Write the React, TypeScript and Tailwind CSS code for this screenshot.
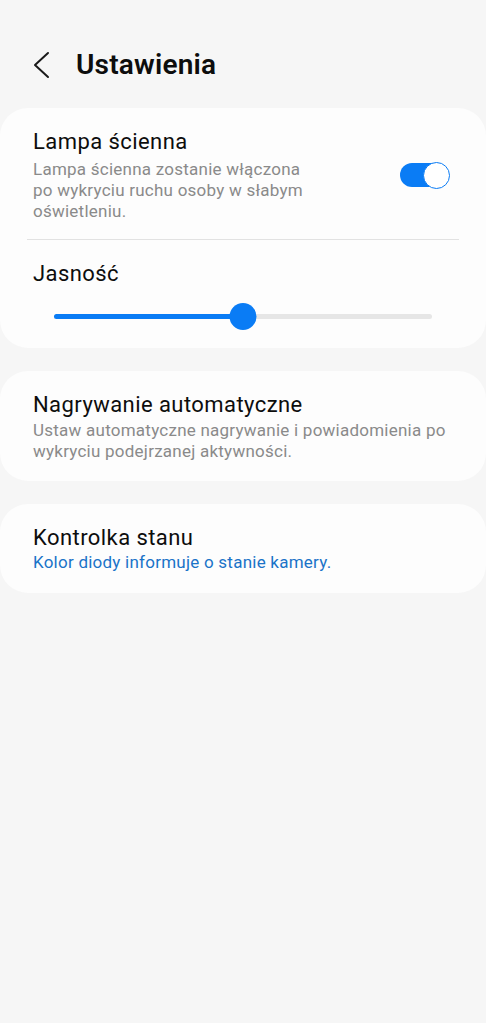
function Toggle() {
  return (
    <div className="relative flex h-[27px] w-[50px] shrink-0 items-center">
      <div className="h-[24px] w-[48px] rounded-full bg-[#0a7cf5]" />
      <div className="absolute right-0 top-0 h-[27px] w-[27px] rounded-full border-[1.5px] border-[#0a7cf5] bg-white" />
    </div>
  );
}

function Slider({ value }: { value: number }) {
  return (
    <div className="relative mx-[54px] h-[27px]">
      <div className="absolute left-0 right-0 top-[11px] h-[5px] rounded-full bg-[#e6e6e6]" />
      <div className="absolute left-0 top-[11px] h-[5px] rounded-full bg-[#0a7cf5]" style={{ width: `${value}%` }} />
      <div
        className="absolute top-0 h-[27px] w-[27px] -translate-x-1/2 rounded-full bg-[#0a7cf5]"
        style={{ left: `${value}%` }}
      />
    </div>
  );
}

export default function App() {
  return (
    <div className="min-h-[1023px] bg-[#f6f6f6] font-['Roboto',sans-serif] text-[#0d0d0d]">
      <div className="flex h-[108px] items-start pt-[47px]">
        <div className="flex h-[36px] items-center">
          <svg className="ml-[33px]" width="17" height="28" viewBox="0 0 17 28" fill="none">
            <polyline points="15,2 2,14 15,26" stroke="#1a1a1a" strokeWidth="2" strokeLinecap="round" strokeLinejoin="round" />
          </svg>
          <h1 className="ml-[26px] text-[28px] font-semibold leading-[36px] tracking-[0.2px]">Ustawienia</h1>
        </div>
      </div>

      <div className="flex flex-col gap-[23px]">
        <div className="rounded-[28px] bg-[#fdfdfd]">
          <div className="flex items-center pb-[17px] pl-[33px] pr-[36px] pt-[20px]">
            <div className="flex-1">
              <div className="text-[22px] leading-[28px] tracking-[0.43px]">Lampa ścienna</div>
              <div className="mt-[3px] w-[280px] text-[17px] leading-[21px] tracking-[0.24px] text-[#8a8a8a]">
                Lampa ścienna zostanie włączona po wykryciu ruchu osoby w słabym oświetleniu.
              </div>
            </div>
            <Toggle />
          </div>
          <div className="mx-[27px] h-px bg-[#e2e2e2]" />
          <div className="pb-[18px] pt-[20px]">
            <div className="pl-[33px] text-[22px] leading-[28px] tracking-[0.43px]">Jasność</div>
            <div className="mt-[15px]">
              <Slider value={50} />
            </div>
          </div>
        </div>

        <div className="rounded-[28px] bg-[#fdfdfd] pb-[19px] pl-[33px] pr-[20px] pt-[20px]">
          <div className="text-[22px] leading-[28px] tracking-[0.43px]">Nagrywanie automatyczne</div>
          <div className="mt-[1px] text-[17px] leading-[21px] tracking-[0.24px] text-[#8a8a8a]">
            Ustaw automatyczne nagrywanie i powiadomienia po wykryciu podejrzanej aktywności.
          </div>
        </div>

        <div className="rounded-[28px] bg-[#fdfdfd] pb-[20px] pl-[33px] pr-[20px] pt-[20px]">
          <div className="text-[22px] leading-[28px] tracking-[0.43px]">Kontrolka stanu</div>
          <div className="text-[17px] leading-[21px] tracking-[0.24px] text-[#1a73c8]">
            Kolor diody informuje o stanie kamery.
          </div>
        </div>
      </div>
    </div>
  );
}
